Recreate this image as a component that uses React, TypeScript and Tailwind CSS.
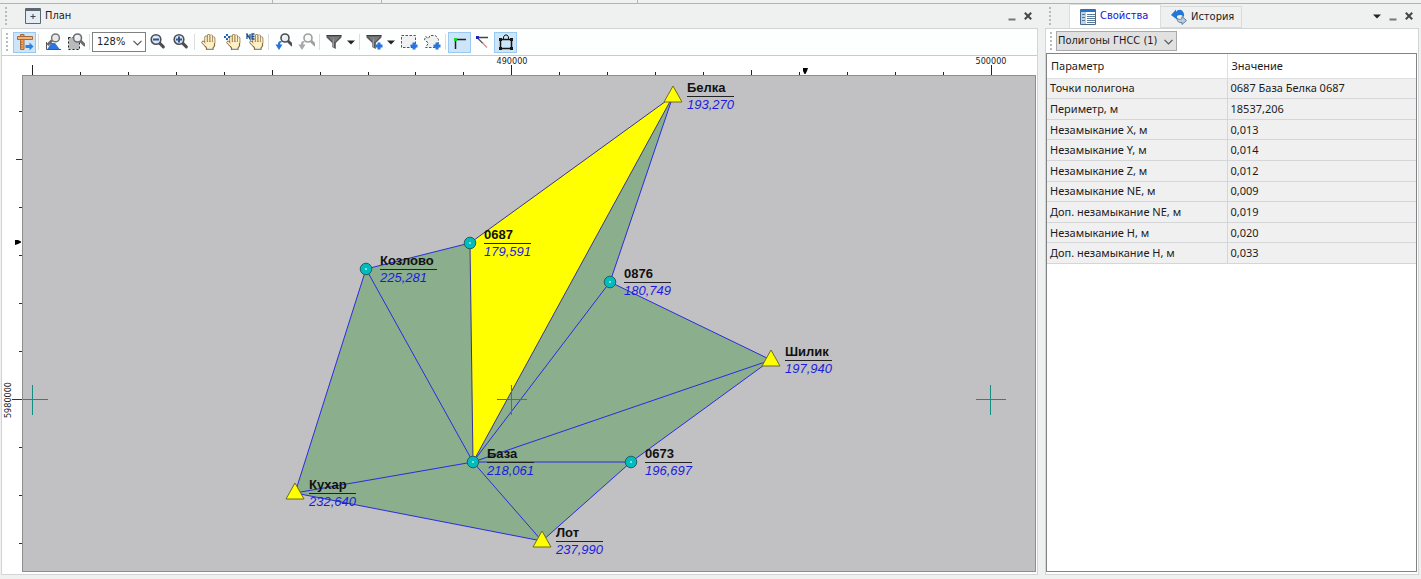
import React from "react";

const navy = "#2b2be0";

type Station = {
  name: string;
  height: string;
  x: number;
  y: number;
  kind: "base" | "point";
  lineWidth: number;
};

const stations: Station[] = [
  { name: "Белка", height: "193,270", x: 650, y: 20, kind: "base", lineWidth: 47 },
  { name: "0687", height: "179,591", x: 447, y: 167, kind: "point", lineWidth: 47 },
  { name: "Козлово", height: "225,281", x: 343, y: 193, kind: "point", lineWidth: 57 },
  { name: "0876", height: "180,749", x: 587, y: 206, kind: "point", lineWidth: 47 },
  { name: "Шилик", height: "197,940", x: 748, y: 284, kind: "base", lineWidth: 47 },
  { name: "База", height: "218,061", x: 450, y: 386, kind: "point", lineWidth: 47 },
  { name: "0673", height: "196,697", x: 608, y: 386, kind: "point", lineWidth: 47 },
  { name: "Кухар", height: "232,640", x: 272, y: 417, kind: "base", lineWidth: 47 },
  { name: "Лот", height: "237,990", x: 519, y: 465, kind: "base", lineWidth: 47 },
];

const vectors: [number, number][] = [
  [2, 1], [2, 5], [2, 7], [7, 5], [7, 8], [8, 5], [8, 6], [6, 5],
  [6, 4], [4, 5], [4, 3], [3, 5], [3, 0],
];

const selectedVectors: [number, number][] = [[1, 0], [0, 5], [1, 5]];

const rows: [string, string][] = [
  ["Точки полигона", "0687 База Белка 0687"],
  ["Периметр, м", "18537,206"],
  ["Незамыкание X, м", "0,013"],
  ["Незамыкание Y, м", "0,014"],
  ["Незамыкание Z, м", "0,012"],
  ["Незамыкание NE, м", "0,009"],
  ["Доп. незамыкание NE, м", "0,019"],
  ["Незамыкание H, м", "0,020"],
  ["Доп. незамыкание H, м", "0,033"],
];

function Grip({ className = "" }: { className?: string }) {
  return (
    <svg className={`w-[3px] shrink-0 ${className}`} height="18" viewBox="0 0 3 18" aria-hidden="true">
      {[1, 5, 9, 13, 17].map((y) => (
        <rect key={y} x="0" y={y - 1} width="2" height="2" fill="#b9babb" />
      ))}
    </svg>
  );
}

function ToolButton({ label, active = false, wide = false, children }: {
  label: string;
  active?: boolean;
  wide?: boolean;
  children: React.ReactNode;
}) {
  return (
    <button
      type="button"
      aria-label={label}
      title={label}
      className={`flex h-[21px] shrink-0 items-center justify-center border ${wide ? "w-[35px]" : "w-[23px]"} ${
        active ? "border-[#99c9f3] bg-[#cce5f9]" : "border-transparent"
      }`}
    >
      {children}
    </button>
  );
}

function Separator() {
  return <span className="mx-0.5 h-4 w-px shrink-0 bg-[#dcdddf]" />;
}

function Chevron() {
  return (
    <svg className="pointer-events-none absolute top-2 right-1" width="9" height="6" viewBox="0 0 9 6" fill="none" aria-hidden="true">
      <path d="M.5 .8l4 4 4-4" stroke="#555" strokeWidth="1.2" />
    </svg>
  );
}

function Icon({ children }: { children: React.ReactNode }) {
  return (
    <svg width="18" height="18" viewBox="0 0 18 18" fill="none" aria-hidden="true" className="shrink-0">
      {children}
    </svg>
  );
}

function Lens({ cx, cy, r = 4, tone = "#4b4f52", fill = "#e8eef2" }: {
  cx: number; cy: number; r?: number; tone?: string; fill?: string;
}) {
  return (
    <>
      <path d={`M${cx + r * 0.7} ${cy + r * 0.7}l4 4`} stroke={tone} strokeWidth="3" strokeLinecap="round" />
      <circle cx={cx} cy={cy} r={r} fill={fill} stroke={tone} strokeWidth="1.6" />
      <path d={`M${cx - r * 0.5} ${cy - 0.5}q0.6 -1.7 2.2 -1.7`} stroke="#fff" strokeWidth="1" />
    </>
  );
}

function Hand() {
  const fingers = "M6 9V4.200M8.600 8V2.600M11.200 8V3M13.700 9.500V5M5.500 12L3 9.300";
  const palm = "M5 8.500h9.500v4.500l-1.500 2v1.500H6.500V15L4.500 12z";
  return (
    <g strokeLinecap="round" strokeLinejoin="round">
      <path d={fingers} stroke="#86663f" strokeWidth="3.200" />
      <path d={palm} fill="#fdf0c4" stroke="#86663f" strokeWidth="1.200" />
      <path d={fingers} stroke="#fdf0c4" strokeWidth="1.800" />
      <path d="M7.300 5v3.500M9.900 4v4.500M12.500 5v3.500" stroke="#b9986a" strokeWidth=".6" />
      <path d="M7 16.300h5.500" stroke="#6f8fc0" strokeWidth="1.200" />
    </g>
  );
}

function Funnel() {
  return (
    <>
      <path d="M1.5 2.5h15v2l-5.7 5.6v6L7.2 14v-3.9L1.5 4.5z" fill="#555759" />
      <path d="M3 3.5h12l-4.5 5.2H7.5z" fill="#787a7c" />
      <path d="M7.5 10v4l1.400.8V4z" fill="#a6a8aa" />
      <path d="M1.5 2.5h15" stroke="#393b3d" />
    </>
  );
}

function Plus() {
  return <path d="M14 9.500v7M10.500 13h7" stroke="#2b73dc" strokeWidth="3" />;
}

function Caret() {
  return (
    <svg width="8" height="5" viewBox="0 0 8 5" aria-hidden="true" className="shrink-0">
      <path d="M0 .5h8L4 4.500z" fill="#242424" />
    </svg>
  );
}

function WindowButtons({ menu = false }: { menu?: boolean }) {
  return (
    <div className="flex items-center gap-1">
      {menu && (
        <button type="button" aria-label="Список окон" className="flex h-3 w-3 items-center justify-center">
          <Caret />
        </button>
      )}
      <button type="button" aria-label="Свернуть" className="flex h-3 w-3 items-center justify-center">
        <svg width="8" height="10" viewBox="0 0 8 10"><path d="M0.5 8.5h7" stroke="#777" strokeWidth="2" /></svg>
      </button>
      <button type="button" aria-label="Закрыть" className="flex h-3 w-3 items-center justify-center">
        <svg width="8" height="8" viewBox="0 0 8 8"><path d="M.8.8l6.400 6.400M7.200.8L.8 7.200" stroke="#454545" strokeWidth="2" /></svg>
      </button>
    </div>
  );
}

function Toolbar() {
  return (
    <div className="flex h-[27px] shrink-0 items-center overflow-hidden border-b border-[#c9cacb] bg-[#fdfefe] pl-1">
      <Grip className="mr-1" />
      <ToolButton label="Линейки" active>
        <Icon>
          <path d="M4.500 1.500h3.500v15H4.500z" fill="#f0a35c" stroke="#a7683a" />
          <path d="M1.500 3.500h15v3h-15z" fill="#f4b378" stroke="#a7683a" />
          <path d="M5 9h1.500M5 11.500h1.500M5 14h1.500" stroke="#a7683a" />
          <path d="M9.500 12h4V9.500l4 4-4 4V15h-4z" fill="#2f81dc" />
        </Icon>
      </ToolButton>
      <Separator />
      <ToolButton label="Показать всё">
        <Icon>
          <path d="M2.500 9v7.500H17" stroke="#555" />
          <path d="M3.500 16l3.500-6h4l4.500 6z" fill="#2f75dc" />
          <path d="M8 7.500l-4.500 4.500" stroke="#666" strokeWidth="2.600" />
          <circle cx="11.500" cy="4.900" r="3.900" fill="#e7e9e8" stroke="#777" strokeWidth="1.500" />
        </Icon>
      </ToolButton>
      <ToolButton label="Увеличить рамкой">
        <Icon>
          <path d="M1.500 4.500h11v12h-11z" fill="#b9babb" stroke="#222" strokeDasharray="2 2" />
          <Lens cx={10.5} cy={5} tone="#6b6d6e" />
        </Icon>
      </ToolButton>
      <Separator />
      <div className="relative shrink-0">
        <select
          aria-label="Масштаб"
          className="block h-5 w-[54px] appearance-none border border-[#7f8182] bg-white pl-1 text-[11px] text-[#222]"
        >
          <option>128%</option>
        </select>
        <Chevron />
      </div>
      <ToolButton label="Уменьшить">
        <Icon><Lens cx={7} cy={6.5} r={4.8} fill="#d8e5f2" /><path d="M4 6.500h6" stroke="#2a5590" strokeWidth="2" /></Icon>
      </ToolButton>
      <ToolButton label="Увеличить">
        <Icon><Lens cx={7} cy={6.5} r={4.8} fill="#d8e5f2" /><path d="M4 6.500h6M7 3.500v6" stroke="#2a5590" strokeWidth="2" /></Icon>
      </ToolButton>
      <Separator />
      <ToolButton label="Сдвинуть"><Icon><Hand /></Icon></ToolButton>
      <ToolButton label="Центрировать">
        <Icon><g transform="translate(2 0)"><Hand /></g><path d="M4 1v6M1 4h6" stroke="#1c5fae" strokeWidth="2" /><circle cx="4" cy="4" r="1.200" fill="#fff" /></Icon>
      </ToolButton>
      <ToolButton label="Перейти к координатам">
        <Icon><g transform="translate(2 0)"><Hand /></g><path d="M1 6V1l3 5V1M8.500 1H6v5h2.500M6 3.500h2" stroke="#1d4e91" strokeWidth="1.300" /></Icon>
      </ToolButton>
      <Separator />
      <ToolButton label="Предыдущий вид">
        <Icon><Lens cx={11} cy={5} /><path d="M7 8c-2.500 0-3 1.500-3 3.500H1.500L5 17l3.500-5.500H6.200c0-1.500.3-2.500 2-2.500z" fill="#2673da" /></Icon>
      </ToolButton>
      <ToolButton label="Следующий вид">
        <Icon><Lens cx={11} cy={5} tone="#9d9fa0" fill="#f6f7f7" /><path d="M7 8c-2.500 0-3 1.500-3 3.500H1.500L5 17l3.500-5.500H6.200c0-1.500.3-2.500 2-2.500z" fill="#a6a8a9" /></Icon>
      </ToolButton>
      <Separator />
      <ToolButton label="Фильтр" wide><Icon><Funnel /></Icon><span className="ml-1"><Caret /></span></ToolButton>
      <Separator />
      <ToolButton label="Добавить фильтр" wide><Icon><Funnel /><Plus /></Icon><span className="ml-1"><Caret /></span></ToolButton>
      <ToolButton label="Выделить рамкой">
        <Icon><path d="M1.500 2.500h14v12h-14z" fill="#f0f1f1" stroke="#555" strokeDasharray="2.500 1.500" /><Plus /></Icon>
      </ToolButton>
      <ToolButton label="Выделить контуром">
        <Icon><path d="M2.500 3.500l3 2L7 2.500h5.500l3 4-.5 8H2.500L5.500 10l-4-3z" fill="#f0f1f1" stroke="#555" strokeDasharray="2.500 1.500" /><Plus /></Icon>
      </ToolButton>
      <Separator />
      <ToolButton label="Прямой угол" active>
        <Icon><path d="M4.500 16V6.500H15" stroke="#222" strokeWidth="1.500" /><path d="M3 5h3v3H3z" fill="#12d633" /></Icon>
      </ToolButton>
      <ToolButton label="Измерить угол">
        <Icon><path d="M3 4.500h11" stroke="#444" strokeWidth="1.500" /><path d="M3 4.500l6 6" stroke="#555" strokeWidth="1.300" /><path d="M8.500 10l4.500 4.500" stroke="#df8787" strokeWidth="1.300" /><path d="M2 3h3v3H2z" fill="#2222b8" /></Icon>
      </ToolButton>
      <ToolButton label="Полигоны" active>
        <Icon><path d="M3.500 6.500h11v9h-11z" stroke="#151515" strokeWidth="1.500" /><path d="M6.500 6V4L8 2h2l1.500 2v2" stroke="#151515" /><path d="M2 5h3v3H2zM13 5h3v3h-3zM2 14h3v3H2zM13 14h3v3h-3z" fill="#151515" /></Icon>
      </ToolButton>
    </div>
  );
}

function TopRuler() {
  const ticks = Array.from({ length: 21 }, (_, i) => 10 + i * 47.93);
  return (
    <div className="relative h-full overflow-hidden">
      <svg className="h-full w-full" aria-hidden="true">
        {ticks.map((x, i) => (
          <rect key={i} x={Math.round(x)} y={i % 10 === 0 ? 9 : i % 5 === 0 ? 14 : 16} width="1" height="12" fill="#222" />
        ))}
        <path d="M781 12h5l-1 3-1.500 3h-1l-1.500-3z" fill="#000" />
      </svg>
      <span className="absolute top-0 left-[490px] -translate-x-1/2 text-[9px] leading-[10px]">490000</span>
      <span className="absolute top-0 left-[969px] -translate-x-1/2 text-[9px] leading-[10px]">500000</span>
    </div>
  );
}

function LeftRuler() {
  const ticks = Array.from({ length: 10 }, (_, i) => 324 + (i - 6) * 47.93);
  return (
    <div className="relative h-full overflow-hidden">
      <svg className="h-full w-full" aria-hidden="true">
        {ticks.map((y, i) => (
          <rect key={i} x={i === 6 ? 10 : i === 1 ? 14 : 17} y={Math.round(y)} width="12" height="1" fill="#333" />
        ))}
        <path d="M13 165v5l3-1 3-1.500v-1l-3-1.500z" fill="#000" />
      </svg>
      <span className="absolute top-[307px] left-0 rotate-180 text-[9px] leading-3 [writing-mode:vertical-rl]">5980000</span>
    </div>
  );
}

function PlanMap() {
  const poly = (ids: number[]) => ids.map((i) => `${stations[i].x},${stations[i].y}`).join(" ");
  const segment = ([a, b]: [number, number], color: string) => (
    <line key={`${a}-${b}`} x1={stations[a].x} y1={stations[a].y} x2={stations[b].x} y2={stations[b].y} stroke={color} />
  );
  return (
    <div className="relative h-full overflow-hidden border border-[#8e8d8f] bg-[#c1c0c2]">
      <svg className="absolute inset-0 h-full w-full" role="img" aria-label="План сети">
        <polygon points={poly([2, 1, 5, 0, 3, 4, 6, 8, 7])} fill="#8bae8c" />
        <polygon points={poly([1, 0, 5])} fill="#ffff00" />
        {vectors.map((v) => segment(v, navy))}
        {selectedVectors.map((v) => segment(v, "#35358f"))}
        {[10, 489, 968].map((x) => (
          <path key={x} d={`M${x - 15} 323.500h30M${x - 0.5} 309v30`} stroke="#168d84" />
        ))}
        {stations.map((s) =>
          s.kind === "base" ? (
            <path key={s.name} d={`M${s.x} ${s.y - 10}l9 16h-18z`} fill="#ffff00" stroke="#6c6c1e" />
          ) : (
            <g key={s.name}>
              <circle cx={s.x} cy={s.y} r="5.800" fill="#00bcbc" stroke="#255f62" />
              <circle cx={s.x} cy={s.y} r="1" fill="#a6f0f0" />
            </g>
          ),
        )}
      </svg>
      {stations.map((s) => (
        <div
          key={s.name}
          className="absolute font-['Liberation_Sans',Arial,sans-serif] text-[13px] leading-4 whitespace-nowrap"
          style={{ left: s.x + 14, top: s.y - 16, width: s.lineWidth }}
        >
          <div className="border-b border-[#222] font-bold text-[#111]">{s.name}</div>
          <div className="text-[#1c1ce0] italic">{s.height}</div>
        </div>
      ))}
    </div>
  );
}

function PlanPanel() {
  return (
    <section className="flex min-w-0 flex-1 flex-col">
      <header className="flex h-6 shrink-0 items-center pr-1 pl-1">
        <Grip />
        <svg className="ml-[17px]" width="16" height="16" viewBox="0 0 16 16" aria-hidden="true">
          <path d="M.5.500h15v15H.5z" fill="#e3edf5" stroke="#5b6670" />
          <path d="M.5 2h15" stroke="#5b6670" strokeWidth="2" />
          <path d="M5.500 8.500h5M8 6v5" stroke="#444" />
        </svg>
        <h1 className="mr-auto ml-1 text-[11px]">План</h1>
        <WindowButtons />
      </header>
      <div className="flex min-h-0 flex-1 flex-col border border-[#d3d4d5] bg-white">
        <Toolbar />
        <div className="grid min-h-0 flex-1 grid-cols-[20px_1fr] grid-rows-[19px_1fr] pr-px pb-[2px]">
          <div className="col-start-2"><TopRuler /></div>
          <div className="col-start-1 row-start-2 min-h-0"><LeftRuler /></div>
          <div className="col-start-2 row-start-2 min-h-0"><PlanMap /></div>
        </div>
      </div>
    </section>
  );
}

function PropertiesPanel() {
  return (
    <section className="flex w-[374px] shrink-0 flex-col">
      <header className="flex h-6 shrink-0 items-center pr-1 pl-1">
        <Grip />
        <div role="tablist" className="mr-auto ml-[17px] flex h-full items-end text-[11px]">
          <button type="button" role="tab" aria-selected="true" className="flex h-6 w-[92px] items-center gap-1 border border-b-0 border-[#dcdddd] bg-white pl-[10px] text-[#1414dc]">
            <svg width="16" height="16" viewBox="0 0 16 16" aria-hidden="true">
              <path d="M.5.500h15v15H.5z" fill="#fff" stroke="#4a6a8a" />
              <path d="M1 2h14" stroke="#2d6fc4" strokeWidth="2" />
              <path d="M1 3h5v12H1z" fill="#b5d2ee" />
              <path d="M2 5.500h3M2 8.500h3M2 11.500h3M7 5.500h8M7 7.500h8M7 9.500h8M7 11.500h8M7 13.500h8" stroke="#5a7a9a" />
            </svg>
            Свойства
          </button>
          <button type="button" role="tab" aria-selected="false" className="flex h-[22px] w-[81px] items-center gap-1 border border-l-0 border-[#d9dada] pl-[10px]">
            <svg width="16" height="16" viewBox="0 0 16 16" aria-hidden="true">
              <path d="M0 6l5-5.500v2.500C7-.5 12 0 13 5c.3 1.500 0 2.500-.5 3C11 5.500 8.500 5.500 6 7v3.500z" fill="#2178d8" />
              <path d="M15.500 11.500L11 15.500v-2C8 14 6 12.500 6 9c1.500 1.500 3 2 5 .5V7.500z" fill="#b8cde0" stroke="#617f9b" />
            </svg>
            История
          </button>
        </div>
        <WindowButtons menu />
      </header>
      <div className="flex min-h-0 flex-1 flex-col border border-[#d3d4d5] bg-white">
        <div className="flex h-6 shrink-0 items-center pl-1">
          <Grip className="mr-[3px]" />
          <div className="relative">
            <select
              aria-label="Тип объектов"
              className="block h-5 w-[121px] appearance-none border border-[#a9aaab] bg-[#e1e1e2] pl-px text-[11px]"
            >
              <option>Полигоны ГНСС (1)</option>
            </select>
            <Chevron />
          </div>
        </div>
        <div className="mr-px mb-[2px] min-h-0 flex-1 overflow-hidden border border-[#828385]">
          <table className="h-[210px] w-full table-fixed border-collapse text-left font-['Noto_Sans','Open_Sans',sans-serif] text-[11px] leading-4">
            <thead>
              <tr className="h-6">
                <th className="w-[180px] border-r border-b border-[#dedfe0] pl-1 font-normal">Параметр</th>
                <th className="border-b border-[#dedfe0] pl-1 font-normal">Значение</th>
              </tr>
            </thead>
            <tbody>
              {rows.map(([name, value]) => (
                <tr key={name} className="bg-[#f0f0f0]">
                  <td className="border-r border-b border-[#d5d6d7] pl-[3px]">{name}</td>
                  <td className="border-b border-[#d5d6d7] pl-[3px]">{value}</td>
                </tr>
              ))}
            </tbody>
          </table>
        </div>
      </div>
    </section>
  );
}

export default function App() {
  return (
    <main className="flex h-screen flex-col bg-[#eff0f0] font-['DejaVu_Sans_Condensed','DejaVu_Sans',sans-serif] text-[#1c1c1c]">
      <div className="flex h-1 shrink-0 border-b border-[#b3b4b5]">
        <span className="w-[273px] border-r border-[#b3b4b5]" />
        <span className="w-[109px] border-r border-[#b3b4b5]" />
        <span className="w-[256px] border-r border-[#b3b4b5]" />
      </div>
      <div className="flex min-h-0 flex-1 gap-[7px] pr-[2px] pb-1 pl-px">
        <PlanPanel />
        <PropertiesPanel />
      </div>
    </main>
  );
}
